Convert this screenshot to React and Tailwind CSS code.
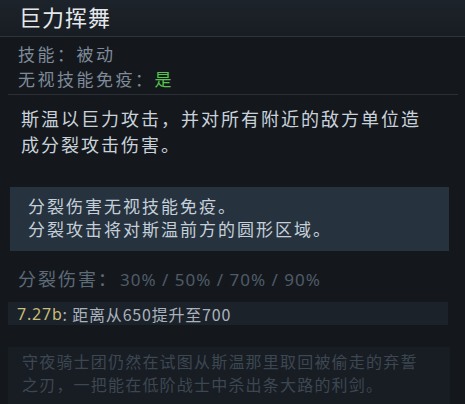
export default function App() {
  const cjk = { fontFamily: '"Noto Sans CJK SC", "Noto Sans", sans-serif' };

  return (
    <div className="w-[465px] h-[404px] overflow-hidden bg-[#14181d]" style={cjk}>
      {/* header */}
      <div className="h-[37px] bg-gradient-to-b from-[#1d232a] to-[#181d23] border-b border-[#2e343b] pl-[19px] flex items-center">
        <h1 className="text-[22px] leading-none text-[#e4e8ec] tracking-[1px] -mt-[5px]">巨力挥舞</h1>
      </div>

      {/* ability type */}
      <div className="h-[58px] mr-[7px] ml-[8px] border-b border-[#2a3036] pl-[10px] pt-[4px] text-[17px] leading-[25px] tracking-[2.5px] text-[#7e8a98]">
        <div>技能：被动</div>
        <div>
          无视技能免疫：<span className="text-[#55c34e]">是</span>
        </div>
      </div>

      {/* description */}
      <div className="pl-[21px] pr-[20px] pt-[10px] text-[18px] leading-[26px] tracking-[2px] text-[#c9d2db]">
        斯温以巨力攻击，并对所有附近的敌方单位造
        <br />
        成分裂攻击伤害。
      </div>

      {/* note */}
      <div className="mt-[30px] ml-[10px] w-[439px] h-[64px] bg-[#26333f] pl-[18px] pt-[7px] text-[17px] leading-[23px] tracking-[2px] text-[#c5cfd9]">
        <div>分裂伤害无视技能免疫。</div>
        <div>分裂攻击将对斯温前方的圆形区域。</div>
      </div>

      {/* values */}
      <div className="mt-[15px] pl-[18px] flex items-baseline leading-[24px]">
        <span className="text-[18px] tracking-[2px] text-[#5d6b79]">分裂伤害：</span>
        <span className="ml-[2px] text-[17px] text-[#4f5b68] tracking-[1px]" style={{ fontFamily: '"Noto Sans", sans-serif' }}>
          30% / 50% / 70% / 90%
        </span>
      </div>

      {/* patch note */}
      <div className="mt-[10px] ml-[8px] w-[440px] h-[23px] bg-[#1c222a] pl-[9px] flex items-center text-[16px] tracking-[0.8px]">
        <span className="text-[#c8bf78]" style={{ fontFamily: '"Noto Sans", sans-serif' }}>7.27b</span>
        <span className="text-[#aab3bd]">: 距离从650提升至700</span>
      </div>

      {/* lore */}
      <div className="mt-[22px] ml-[8px] w-[442px] h-[60px] bg-[#181d23] pl-[14px] pt-[3px] text-[16px] leading-[23px] tracking-[1.2px] text-[#3d4752] whitespace-nowrap">
        <div>守夜骑士团仍然在试图从斯温那里取回被偷走的弃誓</div>
        <div>之刃，一把能在低阶战士中杀出条大路的利剑。</div>
      </div>
    </div>
  );
}
